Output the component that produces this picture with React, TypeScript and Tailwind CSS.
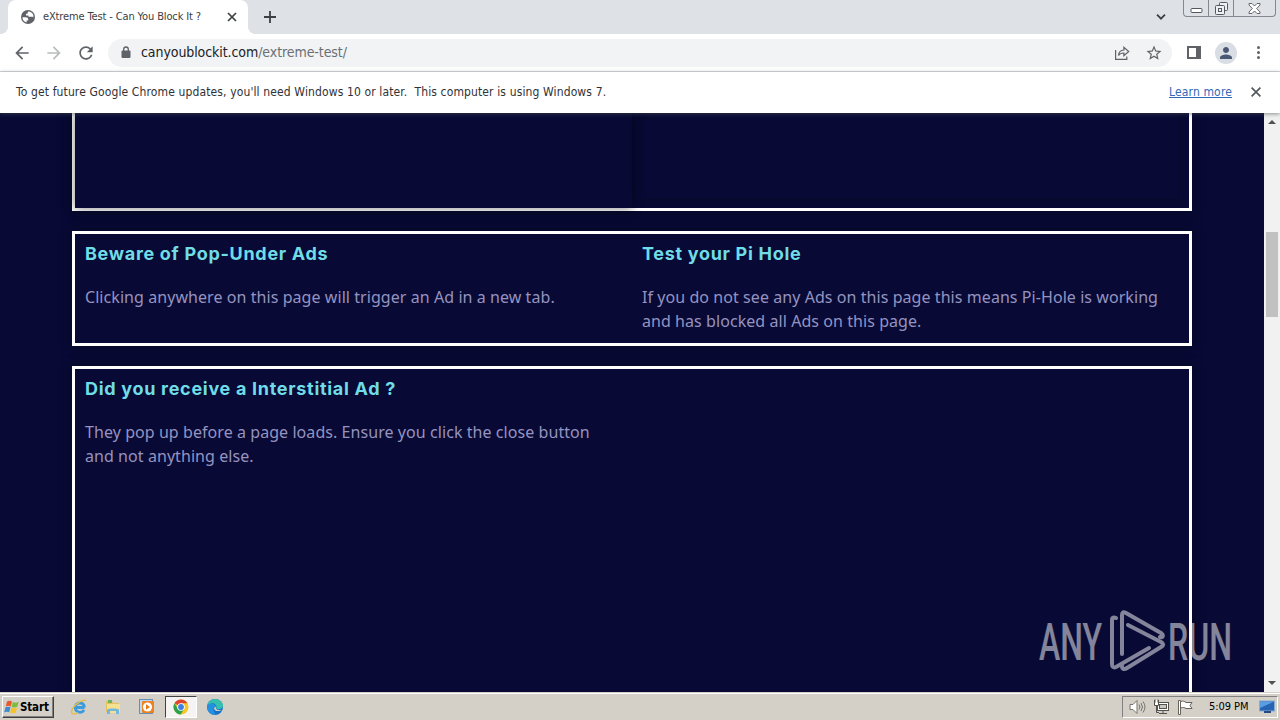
import type { ReactNode } from "react";

const uiFont = "font-['DejaVu_Sans_Condensed','DejaVu_Sans',sans-serif]";

function Icon({ d, className }: { d: string; className?: string }) {
  return (
    <svg viewBox="0 0 24 24" fill="currentColor" className={className}>
      <path d={d} />
    </svg>
  );
}

function TabStrip() {
  return (
    <div className="flex h-[34px] bg-[#dee1e6]">
      <div className="relative ml-2 mt-0 flex w-60 items-center rounded-t-lg bg-white pl-3">
        <div className="absolute -left-2 bottom-0 size-2 bg-[radial-gradient(circle_at_0_0,#dee1e6_8px,white_8px)]" />
        <div className="absolute -right-2 bottom-0 size-2 bg-[radial-gradient(circle_at_100%_0,#dee1e6_8px,white_8px)]" />
        <svg viewBox="0 0 16 16" className="size-4 text-[#5f6368]">
          <circle cx="8" cy="8" r="7" fill="currentColor" />
          <path d="M2.4 8.2h3.3c1.6 0 2.5.8 2.5 2.2v1H6.600v2C4.200 13 2.500 10.900 2.400 8.200z" fill="#fff" />
          <path d="M8.800 2.500c-.7 0-1.200.6-1.200 1.400v.8H6v1.700h2.500v1.300h3.800c.6 0 1 .3 1.100.8.500-3-1.400-5.700-4.600-6z" fill="#fff" />
        </svg>
        <span className="ml-[7px] w-[180px] whitespace-nowrap text-[11px] tracking-[-0.13px] text-[#3c4043]">
          eXtreme Test - Can You Block It ?
        </span>
        <svg viewBox="0 0 10 10" className="ml-[4px] size-[10px]" stroke="#3c4043" strokeWidth="1.7">
          <path d="M1 1l8 8M9 1L1 9" />
        </svg>
      </div>
      <svg viewBox="0 0 12 12" className="ml-4 mt-[11px] size-3" stroke="#3c4043" strokeWidth="1.8">
        <path d="M6 0v12M0 6h12" />
      </svg>
      <svg viewBox="0 0 10 6" className="ml-auto mr-[17px] mt-[14px] h-[6px] w-[10px]" fill="none" stroke="#3c4043" strokeWidth="1.8">
        <path d="M1 .7l4 4 4-4" />
      </svg>
      <div className="mr-1 flex h-[17px] w-[93px] divide-x divide-[#858890] rounded-b-[4px] border border-t-0 border-[#858890]">
        <div className="flex w-[25px] justify-center">
          <svg viewBox="0 0 13 5" className="mt-2 h-[5px] w-[13px]" fill="#fff" stroke="#555861">
            <rect x="1" y=".5" width="11" height="4" rx="1" />
          </svg>
        </div>
        <div className="flex w-[25px] justify-center">
          <svg viewBox="0 0 13 13" className="mt-[2px] size-[13px]" fill="#eef0f3" stroke="#555861">
            <rect x="4.500" y=".5" width="8" height="8" rx="1" />
            <rect x=".5" y="3.500" width="9" height="9" rx="1" />
            <rect x="3.500" y="6.500" width="3" height="3" />
          </svg>
        </div>
        <div className="flex flex-1 justify-center">
          <svg viewBox="0 0 13 11" className="mt-[3px] h-[11px] w-[13px]" fill="#fff" stroke="#555861" strokeWidth=".9">
            <path d="M1 .5h3l2.500 2.500L9 .5h3v1.500L8.700 5.500 12 9v1.500H9L6.500 8 4 10.500H1V9l3.300-3.500L1 2z" />
          </svg>
        </div>
      </div>
    </div>
  );
}

function Toolbar() {
  return (
    <div className="flex h-[38px] items-center border-b border-[#d8dadd] bg-white text-[#5f6368]">
      <Icon className="ml-3 size-5" d="M20 11H7.830l5.590-5.590L12 4l-8 8 8 8 1.410-1.410L7.830 13H20v-2z" />
      <Icon className="ml-3 size-5 text-[#babcbe]" d="M12 4l-1.410 1.410L16.170 11H4v2h12.170l-5.580 5.590L12 20l8-8z" />
      <Icon
        className="ml-3 size-5"
        d="M17.650 6.350C16.200 4.900 14.210 4 12 4c-4.420 0-7.990 3.580-7.990 8s3.570 8 7.990 8c3.730 0 6.840-2.550 7.730-6h-2.080c-.82 2.330-3.040 4-5.650 4-3.310 0-6-2.690-6-6s2.690-6 6-6c1.660 0 3.140.69 4.220 1.780L13 11h7V4l-2.350 2.350z"
      />
      <div className="ml-3 flex h-7 w-[1064px] items-center rounded-full bg-[#f1f3f4] pl-[13px]">
        <svg viewBox="0 0 10 13" className="h-[13px] w-[10px]">
          <rect x=".5" y="4.500" width="9" height="7.500" rx="1" fill="#5f6368" />
          <path d="M2.700 5V3.300a2.300 2.300 0 0 1 4.600 0V5" fill="none" stroke="#5f6368" strokeWidth="1.300" />
        </svg>
        <span className="ml-[10px] whitespace-nowrap text-[14px] tracking-[-0.08px] text-[#202124]">
          canyoublockit.com<span className="text-[#6b6f74]">/extreme-test/</span>
        </span>
        <svg viewBox="0 0 16 16" className="ml-auto size-4" fill="none" stroke="#5f6368" strokeWidth="1.200">
          <path d="M1.600 5v9.300h11.200V11.500" />
          <path d="M4.500 10.500c.2-3.300 2-5.300 5.400-5.500V2.300l4.800 4.200-4.800 4.200V8C7.500 7.900 5.700 8.600 4.500 10.500z" />
        </svg>
        <Icon
          className="ml-[15px] mr-[9px] size-[18px]"
          d="M22 9.240l-7.190-.62L12 2 9.190 8.630 2 9.240l5.460 4.730L5.820 21 12 17.270 18.180 21l-1.630-7.030L22 9.240zM12 15.400l-3.760 2.270 1-4.280-3.320-2.880 4.380-.38L12 6.100l1.710 4.040 4.380.38-3.320 2.880 1 4.280L12 15.400z"
        />
      </div>
      <div className="ml-[15px] h-[13px] w-[14px] border-2 border-r-[5px] border-[#5f6368]" />
      <div className="ml-[14px] flex size-[22px] items-center justify-center rounded-full bg-[#d9dde4]">
        <Icon
          className="size-[18px] text-[#4a5875]"
          d="M12 12c2.210 0 4-1.790 4-4s-1.790-4-4-4-4 1.790-4 4 1.790 4 4 4zm0 2c-2.670 0-8 1.340-8 4v2h16v-2c0-2.660-5.330-4-8-4z"
        />
      </div>
      <div className="ml-5 flex flex-col gap-[2px]">
        <i className="size-[3px] rounded-full bg-[#5f6368]" />
        <i className="size-[3px] rounded-full bg-[#5f6368]" />
        <i className="size-[3px] rounded-full bg-[#5f6368]" />
      </div>
    </div>
  );
}

function InfoBar() {
  return (
    <div className="relative z-10 flex h-[41px] items-center bg-white pb-px pl-4 pr-[19px] text-[12px] shadow-[0_1px_4px_rgba(70,75,80,0.6)]">
      <span className="whitespace-nowrap tracking-[0.127px] text-[#303236]">
        To get future Google Chrome updates, you'll need Windows 10 or later.&nbsp; This computer is using Windows 7.
      </span>
      <a className="ml-auto whitespace-nowrap tracking-[0.15px] text-[#3069b8] underline">Learn more</a>
      <svg viewBox="0 0 10 10" className="ml-[19px] size-[10px]" stroke="#55585c" strokeWidth="1.700">
        <path d="M.6.6l8.800 8.800M9.400.6L.6 9.400" />
      </svg>
    </div>
  );
}

function Block({ title, children }: { title: string; children: ReactNode }) {
  return (
    <div className="w-1/2 p-[10px]">
      <h3 className="whitespace-nowrap font-[Inter,sans-serif] text-[18px] font-bold leading-[20px] tracking-[0.7px] text-[#6fdce6]">
        {title}
      </h3>
      <p className="mt-[21px] whitespace-nowrap font-['Noto_Sans',sans-serif] text-[16px] leading-6 tracking-[0.065px] text-[#9593c0]">
        {children}
      </p>
    </div>
  );
}

function Page() {
  const box = "flex border-[3px] border-white shadow-[0_0_10px_rgba(0,10,20,0.6)]";

  return (
    <main className="flex h-full flex-1 flex-col gap-5 overflow-hidden bg-[#080a35] pl-[72px] pr-[72px]">
      <section className={`${box} h-[98px] shrink-0 border-t-0`}>
        <div className="w-1/2 shadow-[0_0_10px_rgba(0,0,0,0.5)]" />
        <div className="w-1/2 px-[10px] pb-[10px]">
          <div className="h-full shadow-[0_0_10px_rgba(0,0,0,0.25)]" />
        </div>
      </section>
      <section className={`${box} h-[115px] shrink-0`}>
        <Block title="Beware of Pop-Under Ads">Clicking anywhere on this page will trigger an Ad in a new tab.</Block>
        <Block title="Test your Pi Hole">
          If you do not see any Ads on this page this means Pi-Hole is working
          <br />
          and has blocked all Ads on this page.
        </Block>
      </section>
      <section className={`${box} flex-1 border-b-0`}>
        <Block title="Did you receive a Interstitial Ad ?">
          They pop up before a page loads. Ensure you click the close button
          <br />
          and not anything else.
        </Block>
      </section>
    </main>
  );
}

function Scrollbar() {
  return (
    <div className="flex w-4 flex-col items-center bg-[#f1f1f1] text-[#505050]">
      <svg viewBox="0 0 8 4" className="mt-[7px] h-1 w-2" fill="currentColor">
        <path d="M0 4l4-4 4 4z" />
      </svg>
      <div className="mt-[108px] h-[85px] w-3 bg-[#c1c1c1]" />
      <svg viewBox="0 0 8 4" className="mb-[7px] mt-auto h-1 w-2" fill="currentColor">
        <path d="M0 0h8L4 4z" />
      </svg>
    </div>
  );
}

function Watermark() {
  return (
    <svg viewBox="0 0 220 70" className="absolute left-[1035px] top-[493px] h-[70px] w-[220px] opacity-50" fill="#fff">
      <g fontFamily="Roboto" fontWeight="500" fontSize="52">
        <text x="4" y="54" textLength="63" lengthAdjust="spacingAndGlyphs">ANY</text>
        <text x="133" y="54" textLength="64" lengthAdjust="spacingAndGlyphs">RUN</text>
      </g>
      <g fill="none" stroke="#fff" strokeWidth="4" strokeLinejoin="round" strokeLinecap="round">
        <path d="M81 12c-3-1.500-4 0-4 2v44c0 3 1.500 4 4 3l33-19" />
        <path d="M87 48V9c0-3 1.500-3.500 4-2l35 20c3 2 2 5-1 4" />
        <path d="M93 19l33 17c3 2 3 3 0 5L92 62c-3 2-5 1-5-2" />
      </g>
    </svg>
  );
}

function WindowsFlag() {
  return (
    <svg viewBox="0 0 16 16" className="size-4">
      <path d="M3 2.500c2-1 3.500-.8 5 .1L6.800 7.500c-1.600-1-3.200-1-5 0z" fill="#e8592b" />
      <path d="M8.800 3c2 1 3.800.9 5.900-.2l-1.400 5c-1.900 1-3.700 1-5.700-.1z" fill="#7dbb42" />
      <path d="M1.500 8.300c1.700-.9 3.300-.9 5 0l-1.300 5c-1.600-.9-3.200-.9-5 0z" fill="#3f8bd0" />
      <path d="M7.400 8.600c1.900 1 3.700 1 5.700.1l-1.400 4.900c-2 .9-3.700.9-5.600-.1z" fill="#f5c22b" />
    </svg>
  );
}

function ExplorerIcon() {
  return (
    <svg viewBox="0 0 18 18" className="size-[18px]" fill="none">
      <path d="M14.500 9.500H5.300c0-6 8.600-6 9.200 0M5.300 10c.4 5 6.700 5.500 8.800 2" stroke="#3b9bdd" strokeWidth="2.800" />
      <path d="M2 15.500C-.5 11 10 1 16 2.300" stroke="#e8bd43" strokeWidth="1.500" />
      <path d="M2 15.500c2 1.200 4.500 0 6-1" stroke="#e8bd43" strokeWidth="1.200" />
    </svg>
  );
}

function FolderIcon() {
  return (
    <svg viewBox="0 0 18 18" className="size-[18px]">
      <path d="M2 3h6l1 2h6v9H2z" fill="#e5c15b" />
      <path d="M4 2h4v3H4z" fill="#6eb35c" />
      <path d="M3 6h13v9H3z" fill="#f5df91" />
      <path d="M3 16v-4c0-2 12-2 12 0v4h-3v-3H6v3z" fill="#74b7dc" />
    </svg>
  );
}

function MediaIcon() {
  return (
    <svg viewBox="0 0 18 18" className="size-[18px]">
      <rect x="1.500" y="1.500" width="13" height="14" fill="#b9d8ef" stroke="#6290b8" />
      <rect x="4" y="3" width="12" height="12" rx="1" fill="#ee8122" />
      <circle cx="9.500" cy="9" r="4.600" fill="#fff" />
      <path d="M8 6.300v5.400L12 9z" fill="#e87716" />
    </svg>
  );
}

function ChromeIcon() {
  return (
    <svg viewBox="0 0 16 16" className="size-4">
      <circle cx="8" cy="8" r="7.500" fill="#f6c725" />
      <path d="M8 8L1.500 4.200A7.500 7.500 0 0 1 14.500 4.300H8z" fill="#df4535" />
      <path d="M1.500 4.200a7.500 7.500 0 0 0 6.200 11.300L11.200 9.800 8 8 4.800 9.800z" fill="#2da14e" />
      <circle cx="8" cy="8" r="3.800" fill="#fff" />
      <circle cx="8" cy="8" r="2.900" fill="#3c7fe8" />
    </svg>
  );
}

function EdgeIcon() {
  return (
    <svg viewBox="0 0 18 18" className="size-[18px]">
      <circle cx="9" cy="9" r="8" fill="#1672c4" />
      <path d="M1.200 8C2 3 5.500 1 9 1c5 0 8 3.500 8 6.800 0 3.200-5 4.400-6.800 2.500C11.500 7 8 4.800 5 5.500 3 6 1.700 7 1.200 8z" fill="#37bfae" />
      <path d="M1.200 8c2.500-3.800 8.200-3 8.500.5C7 8.500 6.500 13 10 16.500 4.500 17.500.5 13 1.200 8z" fill="#2490df" />
      <path d="M10.200 8.500c-1.500 1.700.8 4.500 5.400 3.200-1.500 1.500-6.500 2.500-7.500-1 0-1.200.8-2.200 2.100-2.200z" fill="#d4d0c8" />
    </svg>
  );
}

function Tray() {
  return (
    <div className="ml-auto mr-[2px] flex h-[22px] w-[156px] items-center border border-[#808080] border-b-white border-r-white pl-[6px]">
      <svg viewBox="0 0 17 14" className="h-[14px] w-[17px]" fill="#fff" stroke="#77736c">
        <path d="M1 4.500h3l4-4v13l-4-4H1z" />
        <path d="M10 4.500q2 2.500 0 5M12 3q3 4 0 8M14 1.500q4 5.500 0 11" fill="none" />
      </svg>
      <svg viewBox="0 0 16 16" className="ml-[7px] size-4" fill="#fff" stroke="#55524d">
        <rect x="4.500" y="3.500" width="11" height="8" />
        <rect x="6.500" y="5.500" width="7" height="4" fill="#c9c7c2" />
        <path d="M10 12v2M6 14.500h8M3.500 7v6.500H6" fill="none" />
        <path d="M1.500 1v5.500h4V1M2 .5v3M5 .5v3" />
      </svg>
      <svg viewBox="0 0 16 16" className="ml-[8px] size-4" fill="#fff" stroke="#66625c">
        <path d="M1.500 1.500h2v14h-2z" />
        <path d="M3.500 2.500c3-1 4 0 5.500 1h6l-2 3 2 3H9c-1.500-1-3-1.500-5.500-.5z" />
      </svg>
      <span className="ml-[16px] w-[42px] whitespace-nowrap text-[11px] tracking-[-0.05px] text-black">5:09 PM</span>
      <svg viewBox="0 0 16 14" className="ml-[8px] h-[14px] w-4">
        <rect x=".5" y="1" width="15" height="10" fill="#2864b4" stroke="#88aacd" />
        <path d="M1 1.500h14L1 8z" fill="#5b9ee0" />
        <path d="M5 11h7v2H5z" fill="#214b82" />
      </svg>
    </div>
  );
}

function Taskbar() {
  return (
    <footer className="flex h-7 items-center border-t border-[#d4d0c8] bg-[#d4d0c8] pt-px shadow-[inset_0_1px_0_white]">
      <button className="ml-[2px] flex h-[22px] w-[52px] items-center border border-b-[#404040] border-l-white border-r-[#404040] border-t-white pl-px shadow-[inset_-1px_-1px_0_#808080]">
        <WindowsFlag />
        <span className="pt-px text-[11.500px] font-bold tracking-[-0.15px] text-black">Start</span>
      </button>
      <div className="ml-4 flex items-center gap-4">
        <ExplorerIcon />
        <FolderIcon />
        <MediaIcon />
      </div>
      <div className="ml-[9px] flex h-[22px] w-8 items-center justify-center border border-b-white border-l-[#404040] border-r-white border-t-[#404040] bg-[#f5f4f2]">
        <ChromeIcon />
      </div>
      <div className="ml-[9px]">
        <EdgeIcon />
      </div>
      <Tray />
    </footer>
  );
}

export default function App() {
  return (
    <div className={`flex h-[720px] w-[1280px] flex-col overflow-hidden ${uiFont}`}>
      <TabStrip />
      <Toolbar />
      <InfoBar />
      <div className="relative flex h-[579px]">
        <Page />
        <Scrollbar />
        <Watermark />
      </div>
      <Taskbar />
    </div>
  );
}
